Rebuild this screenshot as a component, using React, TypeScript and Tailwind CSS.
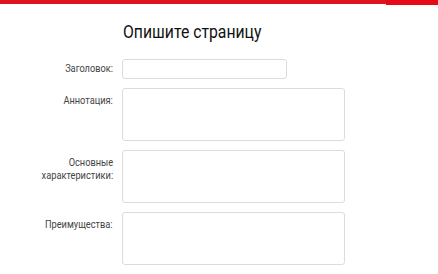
import React from "react";

const font = { fontFamily: 'Roboto, "Open Sans", sans-serif' };

function Row({ label, tall, children }: { label: React.ReactNode; tall?: boolean; children?: React.ReactNode }) {
  return (
    <div className="flex items-start">
      <div className={`w-[113px] shrink-0 text-right text-[11px] leading-[13px] text-[#444] ${tall ? "pt-[6px]" : "pt-[3px]"}`}>
        <span className="inline-block origin-right scale-x-[0.84] whitespace-nowrap">{label}</span>
      </div>
      <div className="ml-[9px]">{children}</div>
    </div>
  );
}

export default function App() {
  return (
    <div className="w-[438px] h-[274px] bg-white overflow-hidden" style={font}>
      <div className="flex items-start h-[5px]">
        <div className="w-[386px] h-[4px] bg-[#e01420]" />
        <div className="flex-1 h-[5px] bg-[#e60a17]" />
      </div>
      <div className="mt-[15px] h-[24px] pl-[123px] text-[19px] leading-[24px] text-[#111]">
        <span className="inline-block origin-left scale-x-[0.83] whitespace-nowrap">Опишите страницу</span>
      </div>
      <div className="mt-[15px] flex flex-col gap-[9px]">
        <Row label="Заголовок:">
          <div className="w-[165px] h-[20px] border border-[#dcdcdc] rounded-[3px]" />
        </Row>
        <Row label="Аннотация:" tall>
          <div className="w-[223px] h-[53px] border border-[#dcdcdc] rounded-[3px]" />
        </Row>
        <Row label={<>Основные<br />характеристики:</>} tall>
          <div className="w-[223px] h-[53px] border border-[#dcdcdc] rounded-[3px]" />
        </Row>
        <Row label="Преимущества:" tall>
          <div className="w-[223px] h-[53px] border border-[#dcdcdc] rounded-[3px]" />
        </Row>
      </div>
    </div>
  );
}
